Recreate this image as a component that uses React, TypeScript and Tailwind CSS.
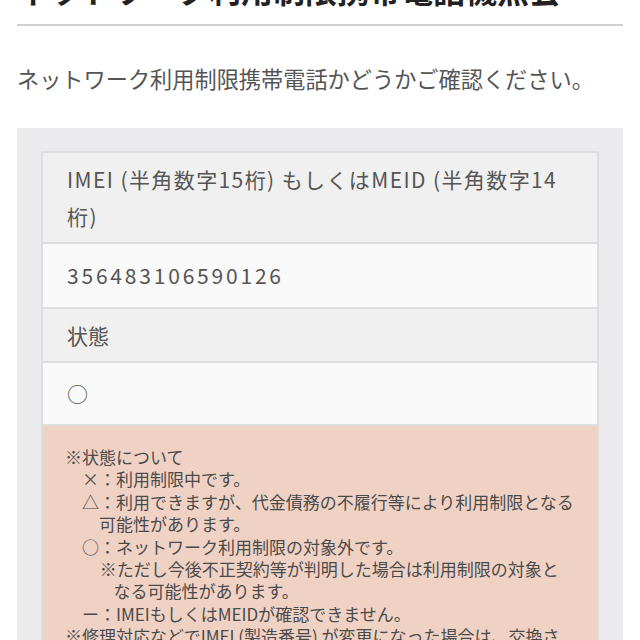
export default function App() {
  const font = "font-['Noto_Sans_CJK_JP','Noto_Sans',sans-serif]";

  return (
    <div className={`h-[640px] w-[640px] overflow-hidden bg-white text-[#555] ${font}`}>
      <div className="px-[17px]">
        {/* page title (scrolled off the top) */}
        <h1 className="-mt-[34px] border-b-2 border-[#d0d0d0] pb-[12px] text-[32px] font-bold leading-[46px] text-[#222]">
          ネットワーク利用制限携帯電話機照会
        </h1>

        <p className="mt-[34px] text-[22.2px] leading-[36px]">
          ネットワーク利用制限携帯電話かどうかご確認ください。
        </p>

        {/* result panel */}
        <div className="mt-[32px] bg-[#ebebed] px-[24px] pt-[23px] pb-[40px]">
          <div className="border-2 border-[#dedede]">
            <div className="bg-[#f0f0f0] px-[24px] pt-[8px] pb-[7px] text-[21px] leading-[37px] tracking-[1.4px]">
              IMEI (半角数字15桁) もしくはMEID (半角数字14桁)
            </div>
            <div className="border-t-2 border-[#dedede] bg-[#f9f9f9] px-[24px] pt-[13px] pb-[13px] text-[21px] leading-[37px] tracking-[2.8px]">
              356483106590126
            </div>
            <div className="border-t-2 border-[#dedede] bg-[#f0f0f0] px-[24px] pt-[8px] pb-[7px] text-[21px] leading-[37px]">
              状態
            </div>
            <div className="border-t-2 border-[#dedede] bg-[#f9f9f9] px-[24px] pt-[12px] pb-[12px] text-[21px] leading-[37px]">
              ○
            </div>
            <div className="border-t-2 border-[#dedede] bg-[#f0d2c5] px-[22px] pt-[20px] pb-[20px] text-[17px] leading-[22.4px] text-[#4a4a4a]">
              <p>※状態について</p>
              <div className="pl-[1em]">
                <p>×：利用制限中です。</p>
                <p className="pl-[1em] -indent-[1em]">
                  △：利用できますが、代金債務の不履行等により利用制限となる可能性があります。
                </p>
                <p>○：ネットワーク利用制限の対象外です。</p>
                <p className="pl-[1.85em] -indent-[0.8em]">
                  ※ただし今後不正契約等が判明した場合は利用制限の対象となる可能性があります。
                </p>
                <p>ー：IMEIもしくはMEIDが確認できません。</p>
              </div>
              <p>
                ※修理対応などでIMEI (製造番号) が変更になった場合は、交換される前のIMEIでは確認できません。
              </p>
            </div>
          </div>
        </div>
      </div>
    </div>
  );
}
